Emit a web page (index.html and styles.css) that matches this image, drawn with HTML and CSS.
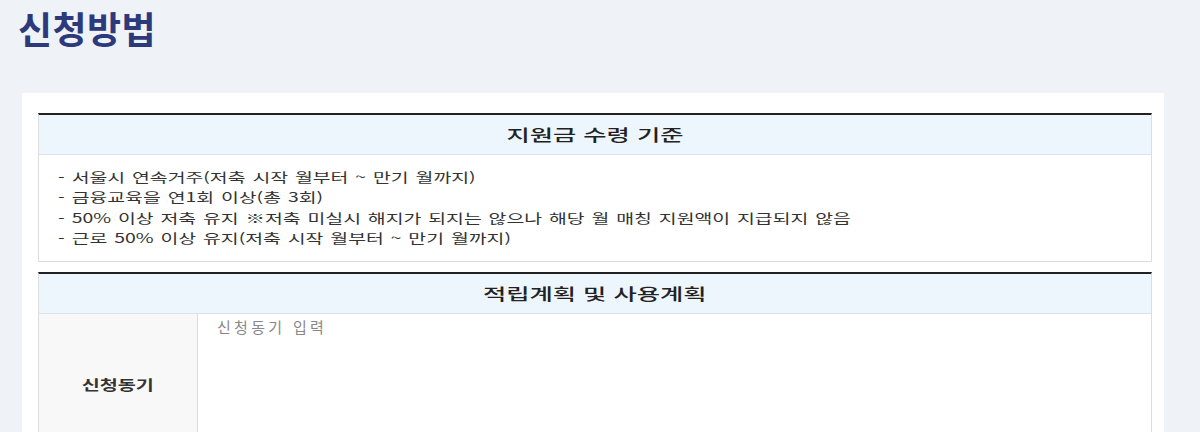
FILE: index.html
```html
<!DOCTYPE html>
<html lang="ko">
<head>
<meta charset="utf-8">
<link rel="stylesheet" href="styles.css">
</head>
<body>
<h1 class="page-title">신청방법</h1>
<div class="panel">
  <section class="box">
    <div class="box-head"><span class="head-text">지원금 수령 기준</span></div>
    <ul class="criteria">
      <li><span class="wide">- 서울시 연속거주(저축 시작 월부터 ~ 만기 월까지)</span></li>
      <li><span class="wide">- 금융교육을 연1회 이상(총 3회)</span></li>
      <li><span class="wide">- 50% 이상 저축 유지 ※저축 미실시 해지가 되지는 않으나 해당 월 매칭 지원액이 지급되지 않음</span></li>
      <li><span class="wide">- 근로 50% 이상 유지(저축 시작 월부터 ~ 만기 월까지)</span></li>
    </ul>
  </section>
  <section class="box box-second">
    <div class="box-head"><span class="head-text">적립계획 및 사용계획</span></div>
    <div class="form-row">
      <div class="form-label"><span class="label-text">신청동기</span></div>
      <div class="form-field"><textarea class="field-input" placeholder="신청동기 입력"></textarea></div>
    </div>
  </section>
</div>
</body>
</html>
```

FILE: styles.css
```css
* { box-sizing: border-box; }
html, body { margin: 0; padding: 0; }
body {
  background: #eff3f8;
  font-family: "Noto Sans CJK KR", "Noto Sans", sans-serif;
  color: #222;
}
.page-title {
  margin: 0;
  padding: 4px 0 0 18px;
  height: 93px;
  font-size: 37px;
  font-weight: 700;
  line-height: 48px;
  color: #2c3a7c;
  letter-spacing: 0.5px;
}
.panel {
  margin-left: 22px;
  width: 1142px;
  background: #fff;
  padding: 20px 12px 0 16px;
}
.box {
  border-top: 2px solid #222;
  border-left: 1px solid #ddd;
  border-right: 1px solid #ddd;
  border-bottom: 1px solid #ddd;
}
.box-second { margin-top: 10px; border-bottom: none; }
.box-head {
  height: 40px;
  background: #eef6fd;
  border-bottom: 1px solid #dbe2ea;
  text-align: center;
  font-size: 16px;
  font-weight: 500;
  line-height: 39px;
  color: #222;
}
.head-text {
  display: inline-block;
  transform: scaleX(1.58);
  transform-origin: center center;
  white-space: nowrap;
}
.criteria {
  list-style: none;
  margin: 0;
  padding: 12px 19px 12px 19px;
  font-size: 13px;
  line-height: 20.4px;
  color: #333;
}
.wide {
  display: inline-block;
  transform: scaleX(1.49);
  transform-origin: left center;
  white-space: nowrap;
  word-spacing: 1px;
}
.form-row {
  display: flex;
  height: 150px;
}
.form-label {
  width: 159px;
  background: #f8f8f8;
  border-right: 1px solid #ddd;
  display: flex;
  align-items: center;
  justify-content: center;
  font-size: 14px;
  font-weight: 700;
  color: #333;
  padding-bottom: 10px;
}
.label-text {
  display: inline-block;
  transform: scaleX(1.4);
  white-space: nowrap;
}
.form-field { flex: 1; }
.field-input {
  display: block;
  width: 100%;
  height: 100%;
  border: none;
  outline: none;
  resize: none;
  padding: 3px 19px;
  font-family: inherit;
  font-size: 15px;
  line-height: 20px;
  letter-spacing: 3.3px;
  color: #333;
  background: #fff;
}
.field-input::placeholder { color: #888; }
```
